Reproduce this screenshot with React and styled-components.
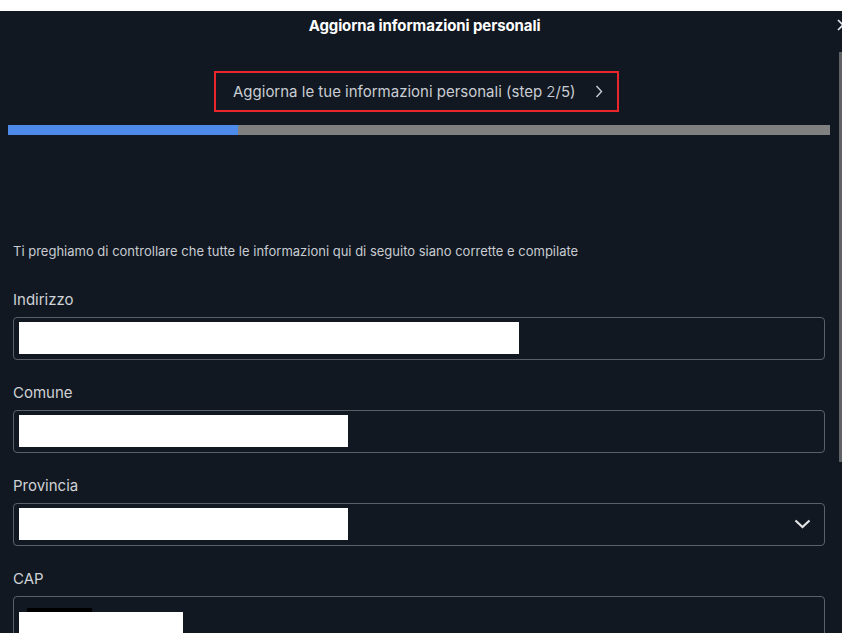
import React from 'react';
import styled, { createGlobalStyle } from 'styled-components';

const GlobalStyle = createGlobalStyle`
body {
  margin: 0;
  background: #ffffff;
  font-family: Inter, "Noto Sans", sans-serif;
}`

const Dialog = styled.div`
position: relative;
margin-top: 11px;
height: 622px;
overflow: hidden;
background: #111821;
color: #d0d3d8;`

const Header = styled.div`
height: 29px;
padding-left: 7px;
display: flex;
align-items: center;
justify-content: center;`

const Title = styled.h1`
margin: 0;
font-size: 15px;
font-weight: 700;
color: #ffffff;
letter-spacing: -0.1px;`

const Close = styled.button`
position: absolute;
top: 8px;
right: -7px;
padding: 0;
border: 0;
background: none;
display: flex;`

const Scroll = styled.div`
position: absolute;
top: 41px;
right: 0;
width: 3px;
height: 410px;
background: #5f6164;`

const StepRow = styled.div`
margin-top: 31px;
padding-right: 9px;
display: flex;
justify-content: center;`

const StepBox = styled.div`
box-sizing: border-box;
width: 405px;
height: 41px;
padding: 0 14px 0 17px;
border: 2px solid #e8262c;
display: flex;
align-items: center;
justify-content: space-between;
font-size: 15px;
color: #c9cdd3;`

const Light = styled.span`
font-weight: 300;`

const Progress = styled.div`
margin: 13px 12px 0 8px;
height: 10px;
background: #808080;`

const Fill = styled.div`
height: 100%;
background: #4d8ae9;`

const Intro = styled.p`
margin: 108px 0 0;
padding-left: 13px;
font-size: 13px;
line-height: 16px;
color: #c8ccd2;`

const Form = styled.div`
margin-top: 32px;
padding: 0 17px 0 13px;
display: flex;
flex-direction: column;
gap: 24px;`

const Field = styled.div`
display: flex;
flex-direction: column;
gap: 8px;`

const Label = styled.label`
font-size: 15px;
line-height: 18px;
color: #cfd2d6;`

const Input = styled.div`
box-sizing: border-box;
height: 43px;
padding: 4px 13px 5px 5px;
border: 1px solid #5b6068;
border-radius: 4px;
display: flex;
align-items: stretch;
justify-content: space-between;`

const Redact = styled.div`
width: ${p => p.w}px;
background: #ffffff;`

const Stack = styled.div`
display: flex;
flex-direction: column;
padding-top: 7px;`

const Dark = styled.div`
width: 65px;
height: 7px;
margin-left: 8px;
background: #000000;`

const Low = styled.div`
width: 164px;
height: 34px;
background: #ffffff;`

const Arrow = styled.svg`
align-self: center;`

const fields = [
    { label: 'Indirizzo', w: 500 },
    { label: 'Comune', w: 329 },
    { label: 'Provincia', w: 329, select: true },
]

export default () => (
    <Dialog>
        <GlobalStyle />
        <Header>
            <Title>Aggiorna informazioni personali</Title>
            <Close>
                <svg width="12" height="12" viewBox="0 0 12 12">
                    <path d="M1 1 L11 11 M11 1 L1 11" stroke="#e6e8eb" strokeWidth="1.6" fill="none" />
                </svg>
            </Close>
        </Header>
        <Scroll />
        <StepRow>
            <StepBox>
                <span>Aggiorna le tue informazioni personali (step <Light>2</Light>/5)</span>
                <svg width="8" height="13" viewBox="0 0 8 13">
                    <polyline points="1.5,1 6.5,6.5 1.5,12" stroke="#c9cdd3" strokeWidth="1.4" fill="none" />
                </svg>
            </StepBox>
        </StepRow>
        <Progress>
            <Fill style={{ width: `${(230 / 822) * 100}%` }} />
        </Progress>
        <Intro>Ti preghiamo di controllare che tutte le informazioni qui di seguito siano corrette e compilate</Intro>
        <Form>
            {fields.map((f, i) => (
                <Field key={i}>
                    <Label>{f.label}</Label>
                    <Input>
                        <Redact w={f.w} />
                        {f.select ? (
                            <Arrow width="17" height="10" viewBox="0 0 17 10">
                                <polyline points="1.5,1.5 8.5,8 15.5,1.5" stroke="#e3e4e6" strokeWidth="2.2" fill="none" />
                            </Arrow>
                        ) : null}
                    </Input>
                </Field>
            ))}
            <Field>
                <Label>CAP</Label>
                <Input>
                    <Stack>
                        <Dark />
                        <Low />
                    </Stack>
                </Input>
            </Field>
        </Form>
    </Dialog>
)
